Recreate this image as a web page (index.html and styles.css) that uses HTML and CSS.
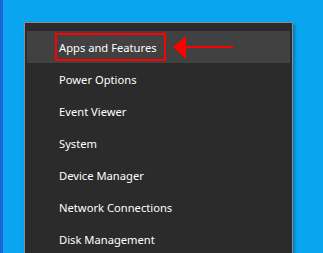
FILE: index.html
```html
<!DOCTYPE html>
<html lang="en">
<head>
    <meta charset="UTF-8">
    <meta name="viewport" content="width=device-width, initial-scale=1.0">
    <title>Quick Link Menu</title>
    <link rel="stylesheet" href="styles.css">
</head>
<body>
    <div class="desktop">
        <div class="menu">
            <div class="menu-item active">
                <span class="callout">Apps and Features</span>
                <svg class="arrow" width="62" height="24" viewBox="0 0 62 24">
                    <polygon points="0,11 13,0 13,23" fill="#ff0000"/>
                    <rect x="12" y="10" width="48" height="2" fill="#ff0000"/>
                </svg>
            </div>
            <div class="menu-item">Power Options</div>
            <div class="menu-item">Event Viewer</div>
            <div class="menu-item">System</div>
            <div class="menu-item">Device Manager</div>
            <div class="menu-item">Network Connections</div>
            <div class="menu-item">Disk Management</div>
        </div>
    </div>
</body>
</html>
```

FILE: styles.css
```css
html, body {
    margin: 0;
    padding: 0;
    height: 100%;
    overflow: hidden;
}

body {
    font-family: "Noto Sans", "Open Sans", sans-serif;
    background-color: #0aa5f1;
}

.desktop {
    height: 100%;
    display: flex;
    flex-direction: column;
    border-left: 3px solid #1a66d6;
    padding: 22px 0 0 21px;
    box-sizing: border-box;
}

.menu {
    flex: 1;
    width: 269px;
    box-sizing: border-box;
    overflow: hidden;
    background-color: #2b2b2b;
    border: 1px solid #8c8c8c;
    border-bottom: none;
    padding: 8px 2px 0 2px;
    box-shadow: 2px 2px 3px rgba(0, 40, 90, 0.35);
}

.menu-item {
    height: 32px;
    flex-shrink: 0;
    display: flex;
    align-items: center;
    padding-left: 32px;
    color: #ffffff;
    font-size: 11.2px;
    white-space: nowrap;
}

.menu-item.active {
    background-color: #414141;
    padding-left: 28px;
}

.callout {
    display: flex;
    align-items: center;
    height: 28px;
    box-sizing: border-box;
    padding: 0 7px 0 2px;
    border: 2px solid #ff0000;
}

.arrow {
    margin-left: 7px;
    margin-top: 1px;
}
```
